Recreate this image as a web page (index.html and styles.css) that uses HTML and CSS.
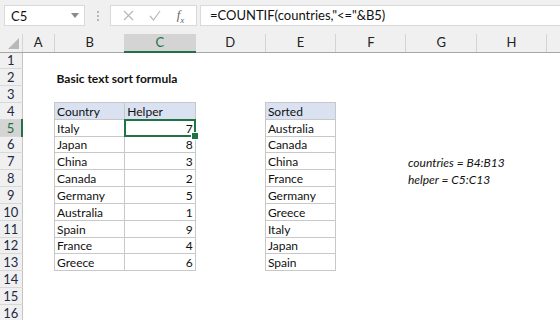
FILE: index.html
```html
<!DOCTYPE html>
<html lang="en">
<head>
    <meta charset="UTF-8">
    <meta name="viewport" content="width=device-width, initial-scale=1.0">
    <title>Basic text sort formula</title>
    <link rel="stylesheet" href="styles.css">
</head>
<body>
    <div class="toolbar">
        <div class="namebox">
            <span>C5</span>
            <svg width="8" height="5" viewBox="0 0 8 5"><path d="M0 0h8L4 5z" fill="#8a8a8a"/></svg>
        </div>
        <div class="grip"><i></i><i></i><i></i></div>
        <div class="fbuttons">
            <svg width="11" height="11" viewBox="0 0 11 11"><path d="M1 1l9 9M10 1l-9 9" stroke="#b8b8b8" stroke-width="1.2" fill="none"/></svg>
            <svg width="12" height="11" viewBox="0 0 12 11"><path d="M1 6l3.5 4L11 1" stroke="#b8b8b8" stroke-width="1.2" fill="none"/></svg>
            <span class="fx">f<sub>x</sub></span>
        </div>
        <div class="formula">=COUNTIF(countries,"&lt;="&amp;B5)</div>
    </div>

    <table class="sheet">
        <colgroup>
            <col class="c-row"><col class="c-a">
            <col class="c-w"><col class="c-w"><col class="c-w"><col class="c-w">
            <col class="c-w"><col class="c-w"><col class="c-w"><col class="c-end">
        </colgroup>
        <thead>
            <tr>
                <th class="corner"><span class="tri"></span></th>
                <th>A</th><th>B</th><th class="sel">C</th><th>D</th>
                <th>E</th><th>F</th><th>G</th><th>H</th><th></th>
            </tr>
        </thead>
        <tbody>
            <tr><th>1</th><td></td><td></td><td></td><td></td><td></td><td></td><td></td><td></td><td></td></tr>
            <tr><th>2</th><td></td><td class="title">Basic text sort formula</td><td></td><td></td><td></td><td></td><td></td><td></td><td></td></tr>
            <tr><th>3</th><td></td><td></td><td></td><td></td><td></td><td></td><td></td><td></td><td></td></tr>
            <tr><th>4</th><td></td><td class="b hd">Country</td><td class="b hd">Helper</td><td></td><td class="b hd">Sorted</td><td></td><td></td><td></td><td></td></tr>
            <tr><th class="sel">5</th><td></td><td class="b">Italy</td><td class="b num active">7</td><td></td><td class="b">Australia</td><td></td><td></td><td></td><td></td></tr>
            <tr><th>6</th><td></td><td class="b">Japan</td><td class="b num">8</td><td></td><td class="b">Canada</td><td></td><td></td><td></td><td></td></tr>
            <tr><th>7</th><td></td><td class="b">China</td><td class="b num">3</td><td></td><td class="b">China</td><td></td><td class="note">countries = B4:B13</td><td></td><td></td></tr>
            <tr><th>8</th><td></td><td class="b">Canada</td><td class="b num">2</td><td></td><td class="b">France</td><td></td><td class="note">helper = C5:C13</td><td></td><td></td></tr>
            <tr><th>9</th><td></td><td class="b">Germany</td><td class="b num">5</td><td></td><td class="b">Germany</td><td></td><td></td><td></td><td></td></tr>
            <tr><th>10</th><td></td><td class="b">Australia</td><td class="b num">1</td><td></td><td class="b">Greece</td><td></td><td></td><td></td><td></td></tr>
            <tr><th>11</th><td></td><td class="b">Spain</td><td class="b num">9</td><td></td><td class="b">Italy</td><td></td><td></td><td></td><td></td></tr>
            <tr><th>12</th><td></td><td class="b">France</td><td class="b num">4</td><td></td><td class="b">Japan</td><td></td><td></td><td></td><td></td></tr>
            <tr><th>13</th><td></td><td class="b">Greece</td><td class="b num">6</td><td></td><td class="b">Spain</td><td></td><td></td><td></td><td></td></tr>
            <tr><th>14</th><td></td><td></td><td></td><td></td><td></td><td></td><td></td><td></td><td></td></tr>
            <tr><th>15</th><td></td><td></td><td></td><td></td><td></td><td></td><td></td><td></td><td></td></tr>
            <tr><th>16</th><td></td><td></td><td></td><td></td><td></td><td></td><td></td><td></td><td></td></tr>
        </tbody>
    </table>
</body>
</html>
```

FILE: styles.css
```css
* {
    margin: 0;
    padding: 0;
    box-sizing: border-box;
}
body {
    font-family: Lato, "Liberation Sans", sans-serif;
    background-color: #ffffff;
    color: #111;
    width: 560px;
    height: 320px;
    overflow: hidden;
}

/* formula bar */
.toolbar {
    height: 34px;
    background-color: #f0f0f0;
    display: flex;
    align-items: flex-start;
    padding-top: 5px;
}
.namebox {
    margin-left: 4px;
    width: 81px;
    height: 21px;
    background-color: #fff;
    border: 1px solid #d9d9d9;
    display: flex;
    align-items: center;
    justify-content: space-between;
    padding: 0 5px 0 6px;
    font-size: 13px;
}
.grip {
    width: 25px;
    height: 21px;
    display: flex;
    flex-direction: column;
    align-items: center;
    justify-content: center;
    gap: 2px;
}
.grip i {
    width: 2px;
    height: 2px;
    background-color: #b5b5b5;
}
.fbuttons {
    width: 87px;
    height: 21px;
    background-color: #fff;
    border: 1px solid #d9d9d9;
    display: flex;
    align-items: center;
    justify-content: space-around;
    padding: 0 4px;
}
.fx {
    font-family: "Liberation Serif", serif;
    font-style: italic;
    font-size: 13px;
    color: #666;
}
.fx sub {
    font-size: 9px;
}
.formula {
    flex: 1;
    margin-left: 3px;
    height: 21px;
    background-color: #fff;
    border: 1px solid #d9d9d9;
    border-right: none;
    padding-left: 9px;
    font-size: 13px;
    line-height: 19px;
    white-space: nowrap;
    overflow: hidden;
}

/* grid */
.sheet {
    border-collapse: collapse;
    table-layout: fixed;
    width: 560px;
    font-size: 12px;
}
.c-row { width: 22px; }
.c-a { width: 32.5px; }
.c-w { width: 70.3px; }
.c-end { width: 13.4px; }
.sheet th,
.sheet td {
    height: 16.83px;
    padding: 0 2px;
    white-space: nowrap;
    line-height: 15px;
    vertical-align: bottom;
}
.sheet thead th {
    height: 18px;
    background-color: #f0f0f0;
    font-weight: normal;
    font-size: 13px;
    border-left: 1px solid #d4d4d4;
    border-bottom: 1px solid #a6a6a6;
    vertical-align: middle;
    color: #222;
}
.sheet thead th.corner {
    border-left: none;
    position: relative;
}
.tri {
    position: absolute;
    right: 3px;
    bottom: 3px;
    width: 0;
    height: 0;
    border-left: 11px solid transparent;
    border-bottom: 11px solid #b9b9b9;
}
.sheet tbody th {
    background-color: #f0f0f0;
    font-weight: normal;
    font-size: 13px;
    text-align: center;
    border-right: 1px solid #c4c4c4;
    border-bottom: 1px solid #d8d8d8;
    color: #1f2a44;
    padding: 0;
}
.sheet thead th.sel {
    background-color: #d4d4d4;
    color: #217346;
    border-bottom: 2px solid #217346;
}
.sheet tbody th.sel {
    background-color: #d4d4d4;
    color: #217346;
    border-right: 2px solid #217346;
}

/* cells */
.title {
    font-weight: bold;
}
.b {
    border: 1px solid #c8c8c8;
}
.hd {
    background-color: #dae2f2;
}
.num {
    text-align: right;
}
.note {
    font-style: italic;
}
.active {
    position: relative;
}
.active::after {
    content: "";
    position: absolute;
    left: -1px;
    top: -1px;
    right: -1px;
    bottom: -1px;
    border: 2px solid #217346;
}
.active::before {
    content: "";
    position: absolute;
    right: -4px;
    bottom: -4px;
    width: 6px;
    height: 6px;
    background-color: #217346;
    border: 1px solid #fff;
    z-index: 1;
}
```
